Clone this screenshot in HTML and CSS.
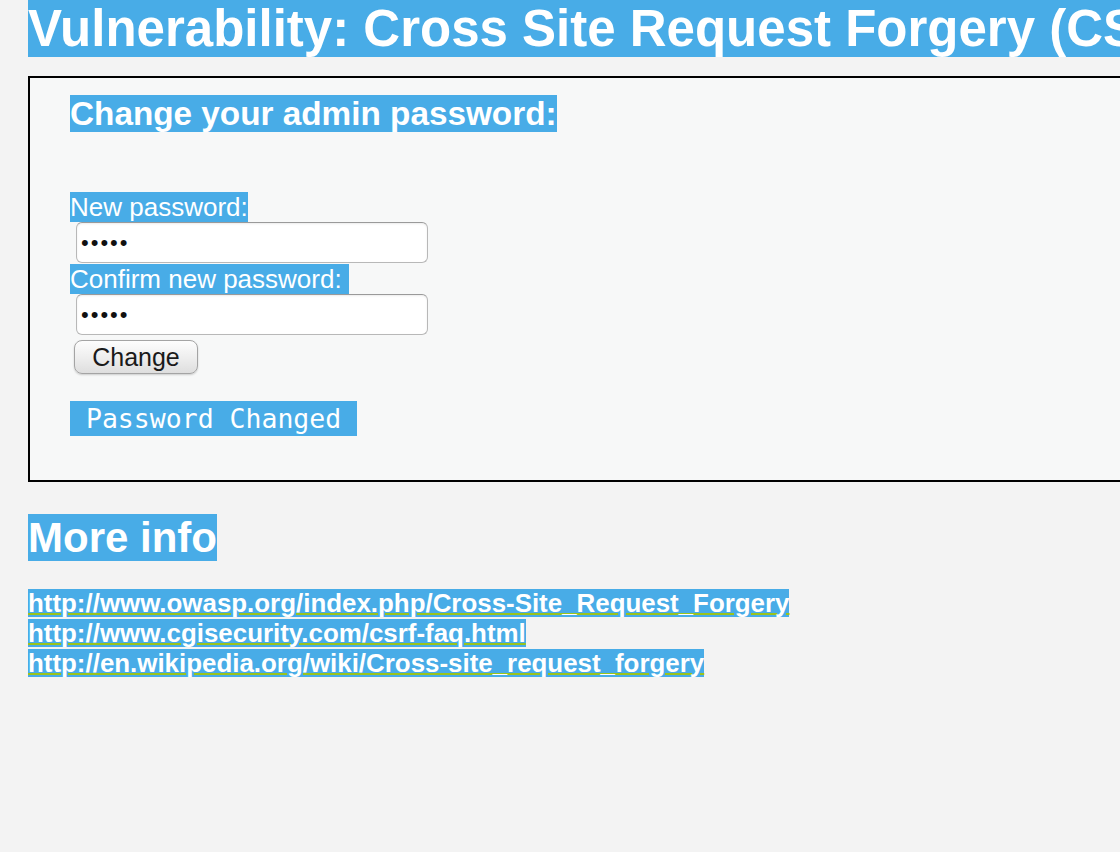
FILE: index.html
```html
<!DOCTYPE html>
<html>
<head>
<meta charset="utf-8">
<link rel="stylesheet" href="styles.css">
</head>
<body>
<div class="page">
  <h1 class="title"><span class="sel">Vulnerability: Cross Site Request Forgery (CSRF)</span></h1>
  <div class="vuln">
    <h3 class="sub"><span class="sel">Change your admin password:</span></h3>
    <form class="form">
      <div class="label"><span class="sel">New password:</span></div>
      <input class="pw" type="text" value="•••••" readonly>
      <div class="label"><span class="sel">Confirm new password:&nbsp;</span></div>
      <input class="pw" type="text" value="•••••" readonly>
      <div class="btnrow"><button class="btn" type="button">Change</button></div>
    </form>
    <pre class="msg"><span class="sel"> Password Changed </span></pre>
  </div>
  <h2 class="more"><span class="sel">More info</span></h2>
  <div class="links">
    <span class="sel"><a href="#">http://www.owasp.org/index.php/Cross-Site_Request_Forgery</a></span><br>
    <span class="sel"><a href="#">http://www.cgisecurity.com/csrf-faq.html</a></span><br>
    <span class="sel"><a href="#">http://en.wikipedia.org/wiki/Cross-site_request_forgery</a></span>
  </div>
</div>
</body>
</html>
```
FILE: styles.css
```css
html, body {
  margin: 0;
  padding: 0;
  background: #f3f3f3;
  overflow: hidden;
}
.page {
  padding-left: 28px;
  font-family: "Liberation Sans", Arial, sans-serif;
  font-size: 26px;
  color: #000;
}
.sel {
  background: #48ace7;
  color: #fff;
}
.title {
  margin: 0;
  font-size: 51px;
  line-height: 57px;
  font-weight: bold;
  white-space: nowrap;
}
.vuln {
  margin-top: 19px;
  width: 1300px;
  border: 2px solid #000;
  background: #f7f8f8;
  padding: 16px 40px 44px 40px;
}
.sub {
  margin: 0;
  font-size: 33.3px;
  line-height: 39px;
  font-weight: bold;
}
.form {
  margin: 59px 0 0 0;
}
.label {
  line-height: 30px;
  height: 30px;
}
.pw {
  display: block;
  box-sizing: border-box;
  margin: 0 0 1px 6px;
  width: 352px;
  height: 41px;
  padding: 0 4px;
  border: 1px solid #b8b8b8;
  border-top-color: #9a9a9a;
  border-radius: 6px;
  background: #fff;
  font-family: "Liberation Sans", Arial, sans-serif;
  font-size: 22px;
  letter-spacing: 2px;
  color: #111;
  outline: none;
  box-shadow: inset 0 1px 2px rgba(0,0,0,0.08);
}
.btnrow {
  margin-top: 5px;
}
.btn {
  margin: 0 0 0 4px;
  width: 124px;
  height: 34px;
  padding: 0;
  border: 1px solid #a4a4a4;
  border-radius: 8px;
  background: linear-gradient(#fdfdfd, #ededed 55%, #dedede);
  font-family: "Liberation Sans", Arial, sans-serif;
  font-size: 25px;
  color: #1a1a1a;
  box-shadow: 0 1px 2px rgba(0,0,0,0.18);
}
.msg {
  margin: 28px 0 0 0;
  font-family: "DejaVu Sans Mono", monospace;
  font-size: 26.5px;
  line-height: 34px;
}
.msg .sel {
  padding: 2px 0;
}
.more {
  margin: 32px 0 0 0;
  font-size: 42px;
  line-height: 48px;
  font-weight: bold;
}
.links {
  margin-top: 26px;
  font-weight: bold;
  font-size: 25.9px;
  line-height: 30px;
}
.links a {
  color: #fff;
  text-decoration: underline;
  text-decoration-color: #9ac31c;
  text-decoration-thickness: 2px;
}
```
